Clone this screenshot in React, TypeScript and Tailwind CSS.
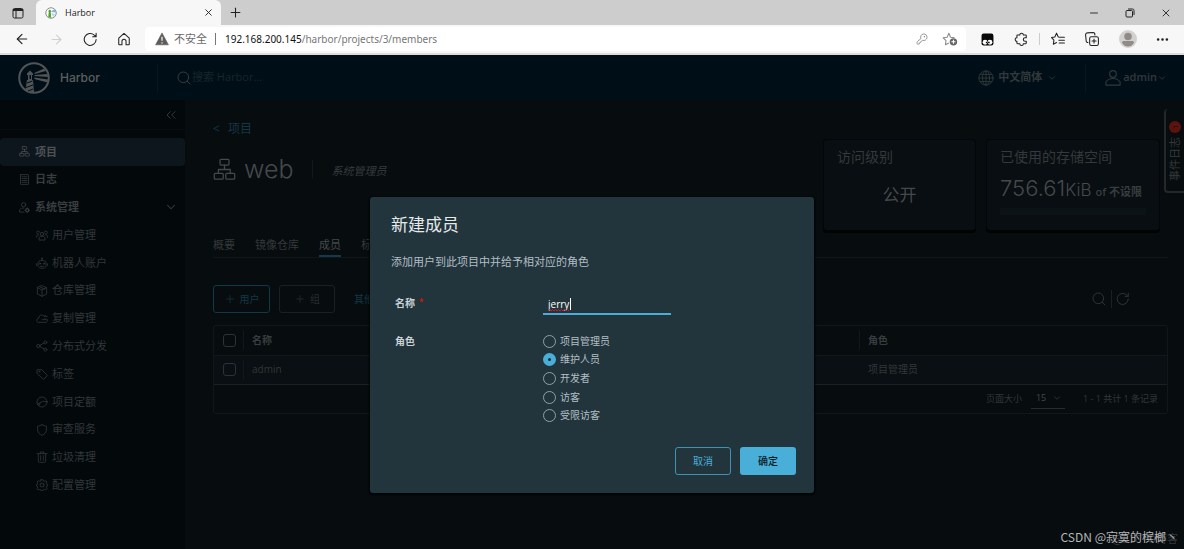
import React, { ReactNode } from "react";
import {
  ArrowLeft,
  ArrowRight,
  ChevronDown,
  ChevronsLeft,
  Ellipsis,
  KeyRound,
  Minus,
  Plus,
  Search,
  X,
} from "lucide-react";

type IconProps = { className?: string; children?: ReactNode };

function Svg({ className = "", children, box = "0 0 36 36", stroke = 2 }: IconProps & { box?: string; stroke?: number }) {
  return (
    <svg
      viewBox={box}
      className={`shrink-0 ${className}`}
      fill="none"
      stroke="currentColor"
      strokeWidth={stroke}
      strokeLinecap="round"
      strokeLinejoin="round"
      aria-hidden="true"
    >
      {children}
    </svg>
  );
}

function OrgIcon({ className, stroke = 2.4 }: IconProps & { stroke?: number }) {
  return (
    <Svg className={className} stroke={stroke}>
      <rect x="11" y="2" width="14" height="9" rx="1.5" />
      <rect x="2" y="24" width="14" height="9" rx="1.5" />
      <rect x="20" y="24" width="14" height="9" rx="1.5" />
      <path d="M18 11v7M8.500 23v-5h18.500v5" />
    </Svg>
  );
}

function LogIcon({ className }: IconProps) {
  return (
    <Svg className={className} stroke={2.5}>
      <rect x="5" y="2" width="26" height="32" rx="1" />
      <path d="M10 9h2M10 15h2M10 21h2M10 27h2M15 9h11M15 15h11M15 21h11M15 27h11" />
    </Svg>
  );
}

function AdminIcon({ className }: IconProps) {
  return (
    <Svg className={className} stroke={2.5}>
      <circle cx="15" cy="9" r="7" />
      <path d="M16 33H2v-7c3-5 8-7 14-6" />
      <circle cx="27" cy="27" r="5" strokeWidth="4" />
      <path d="M27 19v2M27 33v2M19 27h2M33 27h2" />
    </Svg>
  );
}

function UsersIcon({ className }: IconProps) {
  return (
    <Svg className={className} stroke={2.5}>
      <circle cx="18" cy="15" r="5" />
      <path d="M9 32v-5c2-4 5-5 9-5s7 1 9 5v5z" />
      <path d="M11 10a4.500 4.500 0 1 0-4 5M25 10a4.500 4.500 0 1 1 4 5M2 25v-5c1-2 4-3 7-2M34 25v-5c-1-2-4-3-7-2" />
    </Svg>
  );
}

function RobotIcon({ className }: IconProps) {
  return (
    <Svg className={className} stroke={2.5}>
      <path d="M18 4v6M6 19c0-6 5-9 12-9s12 3 12 9v7c0 5-5 8-12 8S6 31 6 26zM2 20v6M34 20v6M13 28h10" />
      <circle cx="12" cy="20" r="2" />
      <circle cx="24" cy="20" r="2" />
      <circle cx="18" cy="4" r="1.500" />
    </Svg>
  );
}

function CubeIcon({ className }: IconProps) {
  return (
    <Svg className={className} stroke={2.5}>
      <path d="M18 2l14 6v19l-14 7-14-7V8zM4 8l14 7 14-7M18 15v19M11 5l14 7" />
    </Svg>
  );
}

function CloudIcon({ className }: IconProps) {
  return (
    <Svg className={className} stroke={2.5}>
      <path d="M31 20c3 1 4 4 3 7s-3 4-6 4H8c-4 0-6-3-6-6s2-6 6-6c0-6 4-10 9-10 3 0 5 1 7 3M18 23h12l-4-3M34 13H24l4-3" />
    </Svg>
  );
}

function ShareIcon({ className }: IconProps) {
  return (
    <Svg className={className} stroke={2.5}>
      <circle cx="7" cy="18" r="5" />
      <circle cx="28" cy="7" r="4.500" />
      <circle cx="28" cy="29" r="4.500" />
      <path d="M12 16l12-7M12 20l12 7" />
    </Svg>
  );
}

function TagIcon({ className }: IconProps) {
  return (
    <Svg className={className} stroke={2.5}>
      <path d="M4 5h13l16 16c1 1 1 2 0 3l-9 9c-1 1-2 1-3 0L4 17z" />
      <circle cx="10" cy="11" r="1.500" />
    </Svg>
  );
}

function QuotaIcon({ className }: IconProps) {
  return (
    <Svg className={className} stroke={2.5}>
      <circle cx="18" cy="18" r="15" />
      <path d="M8 29l4-8 8-5 13 1M12 21l-7 3" />
    </Svg>
  );
}

function ShieldIcon({ className }: IconProps) {
  return (
    <Svg className={className} stroke={2.5}>
      <path d="M18 2c4 3 9 4 13 4v12c0 8-6 13-13 16C11 31 5 26 5 18V6c4 0 9-1 13-4z" />
    </Svg>
  );
}

function TrashIcon({ className }: IconProps) {
  return (
    <Svg className={className} stroke={2.5}>
      <path d="M3 8h30M7 8v23c0 2 1 3 3 3h16c2 0 3-1 3-3V8M13 8V3h10v5M14 14v14M22 14v14" />
    </Svg>
  );
}

function GearIcon({ className }: IconProps) {
  return (
    <Svg className={className} stroke={2.5}>
      <circle cx="18" cy="18" r="6" />
      <path d="M15 2h6l1 4 3 1 4-2 4 4-2 4 1 3 3 1v4l-3 1-1 3 2 4-4 4-4-2-3 1-1 3h-6l-1-3-3-1-4 2-4-4 2-4-1-3-3-1v-4l3-1 1-3-2-4 4-4 4 2 3-1z" />
    </Svg>
  );
}

function GlobeIcon({ className }: IconProps) {
  return (
    <Svg className={className}>
      <circle cx="18" cy="18" r="16" />
      <ellipse cx="18" cy="18" rx="8" ry="16" />
      <path d="M18 2v32M2 18h32M5 10h26M5 26h26" />
    </Svg>
  );
}

function PersonIcon({ className }: IconProps) {
  return (
    <Svg className={className} stroke={2.5}>
      <circle cx="18" cy="9" r="7.500" />
      <path d="M2 34v-7c4-6 9-8 16-8s12 2 16 8v7z" />
    </Svg>
  );
}

function ReloadIcon({ className }: IconProps) {
  return (
    <Svg className={className} box="0 0 24 24" stroke={1.7}>
      <path d="M21 12a9.500 9.500 0 1 1-3-7l3 2.500M21 2v5.500h-5.500" />
    </Svg>
  );
}

function HarborLogo({ className }: IconProps) {
  return (
    <svg viewBox="0 0 64 64" className={`shrink-0 ${className}`} aria-hidden="true">
      <circle cx="32" cy="32" r="29.500" fill="none" stroke="currentColor" strokeWidth="4" />
      <path
        fill="currentColor"
        d="M18 23l6-6 6 6v3h-2v10h2l2 25-17-5 3-20h2V26h-2zM33 22l19-9 4 5-23 6zM33 26l26-2 1 6-27-2zM33 31l27 4-1 6-26-7zM23 26v8h3v-8z"
        fillRule="evenodd"
      />
      <path d="M18 42l11-4M16 51l14-5M20 58l10-4" stroke="#000f17" strokeWidth="2" />
    </svg>
  );
}

function Favicon({ className }: IconProps) {
  return (
    <svg viewBox="0 0 24 24" className={`shrink-0 ${className}`} aria-hidden="true">
      <circle cx="12" cy="12" r="10.500" fill="#fff" stroke="#6d7276" strokeWidth="1.600" />
      <path d="M13 8l7-4 2 7-9-1z" fill="#7eb4dd" />
      <path d="M7 7l2.500-2L12 7v3h-.5l1 12-6-2 1-10H7z" fill="#55a532" />
      <path d="M13 12l8 2-5 6z" fill="#b9d5e8" />
    </svg>
  );
}

function BrowserTabs() {
  return (
    <div className="flex h-[25px] items-stretch bg-[#cdcdcd] text-[#222]">
      <div className="flex w-9 items-center justify-center">
        <svg viewBox="0 0 12 12" className="h-3 w-3" fill="none" stroke="#222" aria-hidden="true">
          <rect x="1" y="1.500" width="10" height="9.500" rx="1.500" />
          <path d="M1 3h10" strokeWidth="2" />
          <path d="M4 3v8" />
        </svg>
      </div>
      <div className="flex w-[185px] items-center rounded-t-md bg-[#f7f7f7] pr-[5px] pl-[9px]">
        <Favicon className="h-3 w-3" />
        <span className="ml-2 flex-1 text-[9px]">Harbor</span>
        <button aria-label="关闭标签页" className="flex h-4 w-4 items-center justify-center">
          <X className="h-[11px] w-[11px]" strokeWidth={2} />
        </button>
      </div>
      <button aria-label="新建标签页" className="flex w-7 items-center justify-center">
        <Plus className="h-[15px] w-[15px]" strokeWidth={1.7} />
      </button>
      <div className="flex-1" />
      <button aria-label="最小化" className="flex w-9 items-center justify-center">
        <Minus className="h-3 w-3" strokeWidth={1.8} />
      </button>
      <button aria-label="还原" className="flex w-9 items-center justify-center">
        <svg viewBox="0 0 10 10" className="h-[10px] w-[10px]" fill="none" stroke="currentColor" aria-hidden="true">
          <rect x="1" y="2.500" width="6.500" height="6.500" rx="1" />
          <path d="M3 1h4.500C8.500 1 9 1.500 9 2.500V7" />
        </svg>
      </button>
      <button aria-label="关闭" className="flex w-9 items-center justify-center">
        <X className="h-3 w-3" strokeWidth={1.8} />
      </button>
    </div>
  );
}

function BrowserToolbar() {
  return (
    <div className="flex h-[30px] items-center border-b-2 border-[#dcdcdc] bg-[#f7f7f7] text-[#222]">
      <div className="flex w-[145px] items-center gap-[19px] pl-[14px]">
        <button aria-label="后退"><ArrowLeft className="h-4 w-4" strokeWidth={1.7} /></button>
        <button aria-label="前进" className="text-[#d0d0d0]"><ArrowRight className="h-[15px] w-[15px]" strokeWidth={1.7} /></button>
        <button aria-label="刷新"><ReloadIcon className="h-[15px] w-[15px]" /></button>
        <button aria-label="主页">
          <Svg className="h-[14px] w-[14px]" box="0 0 24 24" stroke={1.8}>
            <path d="M3 10.500L12 2.500l9 8V21a1 1 0 0 1-1 1h-4.500v-6a3.500 3.500 0 0 0-7 0v6H4a1 1 0 0 1-1-1z" />
          </Svg>
        </button>
      </div>
      <div className="flex h-6 flex-1 items-center rounded bg-white pr-2 pl-[10px]">
        <svg viewBox="0 0 24 24" className="h-[14px] w-[14px] shrink-0" aria-hidden="true">
          <path d="M12 1.500L23 22H1z" fill="#5c5c5c" stroke="#5c5c5c" strokeLinejoin="round" />
          <path d="M12 8v7M12 17.500v2" stroke="#fff" strokeWidth="2" />
        </svg>
        <span className="ml-[5px] text-[11px] text-[#6b6b6b]">不安全</span>
        <span className="ml-2 h-3 w-px bg-[#777]" />
        <span className="ml-[9px] font-['Noto_Sans',sans-serif] text-[10px] whitespace-nowrap text-[#777]">
          <span className="text-[#111]">192.168.200.145</span>/harbor/projects/3/members
        </span>
        <span className="flex-1" />
        <button aria-label="密码"><KeyRound className="h-3 w-3 text-[#8a8a8a]" strokeWidth={1.8} /></button>
        <button aria-label="收藏此页" className="ml-[14px]">
          <svg viewBox="0 0 28 24" className="h-[14px] w-4" fill="none" stroke="#8a8a8a" strokeWidth="1.800" strokeLinejoin="round" aria-hidden="true">
            <path d="M12 19l-6 3 1-7-5-5 7-1 3-7 3 7 7 1" />
            <circle cx="20" cy="17" r="6.500" fill="#666" stroke="none" />
            <path d="M20 13.500v7M16.500 17h7" stroke="#fff" />
          </svg>
        </button>
      </div>
      <div className="flex items-center pr-[14px] pl-[15px]">
        <button aria-label="扩展程序">
          <svg viewBox="0 0 24 24" className="h-[13px] w-[13px]" aria-hidden="true">
            <rect x="1" y="1" width="22" height="22" rx="4" fill="#0a0a0a" />
            <circle cx="7.500" cy="17" r="4.500" fill="#fff" />
            <circle cx="16.500" cy="17" r="4.500" fill="#fff" />
            <path d="M9 16h3v3H9zM13 16h3v3h-3z" fill="#0a0a0a" />
          </svg>
        </button>
        <button aria-label="扩展" className="ml-5">
          <Svg className="h-[14px] w-[14px]" box="0 0 24 24" stroke={1.8}>
            <path d="M6 5h4a3 3 0 0 1 6 0h4a1 1 0 0 1 1 1v4h-2a3 3 0 0 0 0 6h2v3a1 1 0 0 1-1 1h-4a3 3 0 0 1-6 0H6a1 1 0 0 1-1-1v-3a3 3 0 0 1 0-6V6a1 1 0 0 1 1-1z" />
          </Svg>
        </button>
        <span className="mx-[11px] h-3 w-px bg-[#ccc]" />
        <button aria-label="收藏夹">
          <Svg className="h-[14px] w-[14px]" box="0 0 24 24" stroke={1.8}>
            <path d="M15.500 9L12.500 8.500 9.500 2 6.500 8.500 1 9.500 5 14 4 21 9.500 18M15.500 9h7.500M13.500 14h9.500M14 19h9" />
          </Svg>
        </button>
        <button aria-label="集锦" className="ml-5">
          <Svg className="h-[14px] w-[14px]" box="0 0 24 24" stroke={1.8}>
            <rect x="8" y="8" width="15" height="15" rx="3" />
            <path d="M15.500 12v7M12 15.500h7M5 18c-1.500 0-3-1-3-3L1 5c0-2 1-3.500 3-3.500L14 1c2 0 3 1 3 4" />
          </Svg>
        </button>
        <button aria-label="个人资料" className="ml-5">
          <svg viewBox="0 0 24 24" className="h-[18px] w-[18px]" aria-hidden="true">
            <circle cx="12" cy="12" r="12" fill="#d3d1cf" />
            <circle cx="12" cy="8.500" r="5" fill="#8f8b88" />
            <path d="M4 17c0-2 1-2.500 3-2.500h10c2 0 3 .5 3 2.500-2 3-4 5-8 5s-6-2-8-5z" fill="#8f8b88" />
          </svg>
        </button>
        <button aria-label="更多" className="ml-[18px]"><Ellipsis className="h-[15px] w-[15px]" strokeWidth={2.2} /></button>
      </div>
    </div>
  );
}

function Navbar() {
  return (
    <header className="flex h-[45px] items-center bg-[#000f17] text-[#31383b]">
      <a href="#" className="flex w-[157px] items-center pl-[18px] text-[#5c5f60]">
        <HarborLogo className="h-8 w-8 text-[#525556]" />
        <span className="ml-[10px] font-[Inter,sans-serif] text-[12px] font-medium">Harbor</span>
      </a>
      <span className="h-[30px] w-px bg-[#08161d]" />
      <label className="ml-[18px] flex flex-1 items-center">
        <Search className="h-4 w-4 text-[#363d40]" strokeWidth={1.5} />
        <input
          aria-label="搜索 Harbor"
          placeholder="搜索 Harbor..."
          className="w-48 bg-transparent text-[11px] outline-none placeholder:text-[#18252b]"
        />
      </label>
      <button className="flex items-center text-[11px] font-semibold">
        <GlobeIcon className="mr-1 h-4 w-4" />
        中文简体
        <ChevronDown className="ml-[5px] h-[10px] w-[10px]" />
      </button>
      <span className="ml-7 h-[30px] w-px bg-[#08161d]" />
      <button className="mr-[17px] ml-[19px] flex items-center text-[11px] font-semibold">
        <PersonIcon className="mr-[2px] h-4 w-4" />
        admin
        <ChevronDown className="h-[10px] w-[10px]" />
      </button>
    </header>
  );
}

const subItems = [
  { label: "用户管理", Icon: UsersIcon },
  { label: "机器人账户", Icon: RobotIcon },
  { label: "仓库管理", Icon: CubeIcon },
  { label: "复制管理", Icon: CloudIcon },
  { label: "分布式分发", Icon: ShareIcon },
  { label: "标签", Icon: TagIcon },
  { label: "项目定额", Icon: QuotaIcon },
  { label: "审查服务", Icon: ShieldIcon },
  { label: "垃圾清理", Icon: TrashIcon },
  { label: "配置管理", Icon: GearIcon },
];

function Sidebar() {
  return (
    <aside className="w-[185px] shrink-0 bg-[#03080b] text-[11px] text-[#32373a]">
      <div className="flex h-[30px] items-center justify-end border-b border-[#070d11] pr-[6px]">
        <button aria-label="折叠菜单"><ChevronsLeft className="h-4 w-4" strokeWidth={1.5} /></button>
      </div>
      <nav className="mt-2 flex h-[361px] flex-col">
        <a href="#projects" className="flex flex-1 items-center rounded bg-[#0d161c] pl-[19px] font-bold text-[#4d5154]">
          <OrgIcon className="mr-[5px] h-[11px] w-[11px]" />项目
        </a>
        <a href="#logs" className="flex flex-1 items-center pl-[19px] font-bold text-[#383d3f]">
          <LogIcon className="mr-[5px] h-[11px] w-[11px]" />日志
        </a>
        <button className="flex flex-1 items-center pr-[7px] pl-[19px] font-bold text-[#383d3f]">
          <AdminIcon className="mr-[5px] h-[11px] w-[11px]" />
          <span className="flex-1 text-left">系统管理</span>
          <ChevronDown className="h-[14px] w-[14px]" strokeWidth={1.8} />
        </button>
        {subItems.map(({ label, Icon }) => (
          <a key={label} href="#admin" className="flex flex-1 items-center pl-9">
            <Icon className="mr-1 h-3 w-3" />
            {label}
          </a>
        ))}
      </nav>
    </aside>
  );
}

function Summary() {
  return (
    <div className="flex items-start">
      <div className="flex-1">
        <a href="#projects" className="flex h-4 items-center gap-2 text-[12px] text-[#123746]">
          <span>&lt;</span>项目
        </a>
        <div className="mt-[17px] flex h-[30px] items-center text-[#45494b]">
          <OrgIcon className="h-[23px] w-[23px]" stroke={2} />
          <h1 className="ml-2 font-[Inter,sans-serif] text-[25px] leading-[30px] font-light">web</h1>
          <span className="ml-[19px] h-[18px] w-px bg-[#12191c]" />
          <em className="mt-1 ml-[18px] text-[11px] text-[#383d3f]">系统管理员</em>
        </div>
      </div>
      <div className="mt-[18px] mr-2 flex gap-[10px] text-[#34393b]">
        <section className="h-[92px] w-[153px] rounded-sm border border-[#030709] border-b-[#010304] bg-[#080e11] px-[13px] pt-[7px] shadow-[0_2px_0_#010304]">
          <h2 className="text-[14px] leading-5">访问级别</h2>
          <p className="mt-4 text-center text-[17px] leading-6 text-[#45494b]">公开</p>
        </section>
        <section className="h-[92px] w-[174px] rounded-sm border border-[#030709] border-b-[#010304] bg-[#080e11] px-[13px] pt-[7px] shadow-[0_2px_0_#010304]">
          <h2 className="text-[14px] leading-5">已使用的存储空间</h2>
          <p className="mt-[9px] flex items-baseline leading-6 whitespace-nowrap text-[#45494b]">
            <span className="font-[Inter,sans-serif] text-[22px] font-light">756.61</span>
            <span className="font-[Inter,sans-serif] text-[17px] font-light">KiB</span>
            <span className="ml-1 text-[11px] font-semibold text-[#383d3f]">of 不设限</span>
          </p>
          <div className="mt-1 h-[7px] bg-[#0c1316]" />
        </section>
      </div>
    </div>
  );
}

function Members() {
  return (
    <>
      <nav className="mt-1 flex h-[23px] gap-5 border-b border-[#0f1619] text-[11px] leading-5 text-[#34393b]">
        <a href="#summary">概要</a>
        <a href="#repos">镜像仓库</a>
        <a href="#members" className="border-b-2 border-[#123a49] text-[#45494b]">成员</a>
        <a href="#labels">标签</a>
      </nav>
      <div className="mt-[27px] flex h-7 items-center text-[10px] text-[#123746]">
        <button className="flex h-7 w-[57px] items-center justify-center gap-1 rounded-[3px] border border-[#123746]">
          <Plus className="h-3 w-3" strokeWidth={1.5} />用户
        </button>
        <button className="ml-[9px] flex h-7 w-14 items-center justify-center gap-1 rounded-[3px] border border-[#1a2023] text-[#262c2f]">
          <Plus className="h-3 w-3" strokeWidth={1.5} />组
        </button>
        <button className="ml-[19px]">其他操作</button>
        <span className="flex-1" />
        <button aria-label="搜索" className="text-[#2f3436]"><Search className="h-4 w-4" strokeWidth={1.5} /></button>
        <span className="mx-1 h-[18px] w-px bg-[#1a2023]" />
        <button aria-label="刷新列表" className="mr-[38px] text-[#2f3436]"><ReloadIcon className="h-[14px] w-[14px]" /></button>
      </div>
      <div className="mt-3 rounded-[3px] border border-[#11181b] text-[10px] text-[#32373a]">
        <table className="w-full table-fixed border-collapse text-left">
          <thead>
            <tr className="h-[29px] border-b border-[#11181b]">
              <th className="w-[30px]">
                <div className="flex h-5 items-center border-r border-[#11181b] pl-[9px]">
                  <input type="checkbox" aria-label="全选" className="h-[13px] w-[13px] appearance-none rounded-[3px] border border-[#2c3235]" />
                </div>
              </th>
              <th className="pl-2 font-semibold text-[#383d3f]">名称</th>
              <th className="w-[308px]">
                <div className="flex h-5 items-center border-l border-[#11181b] pl-2 font-semibold text-[#383d3f]">角色</div>
              </th>
            </tr>
          </thead>
          <tbody>
            <tr className="h-[29px] border-b border-[#1a2023] bg-[#090f12]">
              <td>
                <div className="flex h-5 items-center border-r border-[#11181b] pl-[9px]">
                  <input type="checkbox" aria-label="选择 admin" className="h-[13px] w-[13px] appearance-none rounded-[3px] border border-[#2c3235]" />
                </div>
              </td>
              <td className="pl-2">admin</td>
              <td className="pl-[9px]">项目管理员</td>
            </tr>
          </tbody>
        </table>
        <div className="flex h-[28px] items-center justify-end pr-[9px] text-[9px]">
          <label htmlFor="page-size">页面大小</label>
          <div className="relative mr-[18px] ml-[9px] flex items-center border-b border-[#262c2f]">
            <select id="page-size" defaultValue="15" className="h-5 w-[34px] appearance-none bg-transparent pl-[5px] text-[#45494b] outline-none">
              <option>15</option>
              <option>25</option>
              <option>50</option>
            </select>
            <ChevronDown className="pointer-events-none absolute right-[3px] h-[10px] w-[10px]" />
          </div>
          <span>1 - 1 共计 1 条记录</span>
        </div>
      </div>
    </>
  );
}

const roles = ["项目管理员", "维护人员", "开发者", "访客", "受限访客"];

function MemberDialog() {
  return (
    <div
      role="dialog"
      aria-modal="true"
      aria-labelledby="dialog-title"
      className="w-[444px] rounded-[3px] bg-[#22343c] px-[18px] pt-4 pb-[18px] text-[10px] text-[#b3bfc5] shadow-[0_1px_2px_1px_#020405]"
    >
      <h2 id="dialog-title" className="pl-[3px] text-[17px] leading-6 text-[#e6eaec]">新建成员</h2>
      <p className="mt-[17px] pl-[3px] text-[11px] leading-4">添加用户到此项目中并给予相对应的角色</p>
      <form onSubmit={(e) => e.preventDefault()}>
        <div className="mt-[22px] flex h-[23px] items-center pl-[7px]">
          <label htmlFor="member-name" className="flex w-[148px] items-center gap-1 font-semibold text-[#c9d2d6]">
            名称 <span className="h-4 text-[8px] text-[#c92100]">*</span>
          </label>
          <div className="relative h-[23px]">
            <input
              id="member-name"
              defaultValue="jerry"
              className="h-[23px] w-32 border-b-2 border-[#49afd9] bg-transparent px-[5px] pt-[3px] text-[10px] text-white outline-none"
            />
            <svg viewBox="0 0 22 3" className="absolute top-[17px] left-[5px] h-[3px] w-[22px]" fill="none" stroke="#d3191f" aria-hidden="true">
              <path d="M0 2l1.500-1.500L3 2l1.500-1.500L6 2l1.500-1.500L9 2l1.500-1.500L12 2l1.500-1.500L15 2l1.500-1.500L18 2l1.500-1.500L21 2" />
            </svg>
            <span className="absolute top-[6px] left-[27px] h-3 w-px bg-white" />
          </div>
        </div>
        <div role="radiogroup" aria-labelledby="role-label" className="mt-[17px] flex pl-[7px]">
          <span id="role-label" className="w-[148px] leading-[18px] font-semibold text-[#c9d2d6]">角色</span>
          <div className="flex h-[93px] flex-col">
            {roles.map((role) => (
              <label key={role} className="flex flex-1 items-center gap-1">
                <input
                  type="radio"
                  name="role"
                  defaultChecked={role === "维护人员"}
                  className="h-[13px] w-[13px] appearance-none rounded-full border border-[#93a1a8] checked:border-[5px] checked:border-[#49afd9] checked:bg-[#1b2a32]"
                />
                {role}
              </label>
            ))}
          </div>
        </div>
        <div className="mt-[22px] flex justify-end gap-[9px]">
          <button type="button" className="h-7 w-14 rounded-[3px] border border-[#3f93b6] text-[#49afd9]">取消</button>
          <button type="submit" className="h-7 w-14 rounded-[3px] bg-[#49afd9] font-medium text-[#0b1a22]">确定</button>
        </div>
      </form>
    </div>
  );
}

export default function App() {
  return (
    <div className="relative flex min-h-screen flex-col overflow-hidden bg-[#070c0f] font-['Open_Sans','Noto_Sans_CJK_SC',sans-serif]">
      <BrowserTabs />
      <BrowserToolbar />
      <div className="relative flex flex-1 flex-col">
        <Navbar />
        <div className="flex flex-1">
          <Sidebar />
          <main className="min-w-0 flex-1 pt-[21px] pr-4 pl-7">
            <Summary />
            <Members />
          </main>
        </div>
        <button className="absolute top-[54px] right-0 flex h-[84px] w-5 flex-col items-center gap-1 rounded-l-sm border-b-2 border-l-2 border-[#24282a] pt-3 text-[11px] text-[#34393b]">
          <span className="flex h-3 w-3 -rotate-90 items-center justify-center rounded-full bg-[#5c130e] text-[8px] text-[#0b0e10]">1</span>
          <span className="rotate-180 leading-4 whitespace-nowrap [text-orientation:sideways] [writing-mode:vertical-rl]">事件日志</span>
        </button>
        <div className="absolute inset-0 flex items-start justify-center pt-[142px]">
          <MemberDialog />
        </div>
      </div>
      <div className="absolute right-[6px] bottom-[2px] font-['Noto_Sans_CJK_SC',sans-serif] whitespace-nowrap">
        <span className="absolute right-0 bottom-px text-[11px] text-[#34383a]">@51CTO博客</span>
        <span className="relative text-[12px] text-[#b4b6b7]">CSDN @寂寞的槟榔丶</span>
      </div>
    </div>
  );
}
